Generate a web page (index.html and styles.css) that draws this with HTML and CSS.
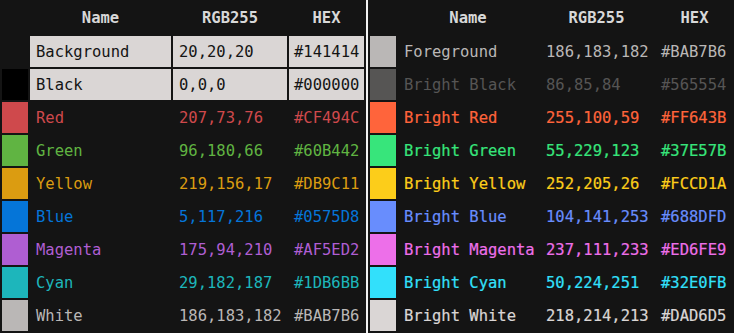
FILE: index.html
```html
<!DOCTYPE html>
<html>
<head>
<meta charset="utf-8">
<link rel="stylesheet" href="styles.css">
</head>
<body>
<div class="page">
  <div class="panel panel-left">
    <div class="head"></div><div class="head">Name</div><div class="head">RGB255</div><div class="head">HEX</div>

    <div class="sw" style="background:#141414"></div><div class="cell hl">Background</div><div class="cell hl">20,20,20</div><div class="cell hl">#141414</div>
    <div class="sw" style="background:#000000"></div><div class="cell hl">Black</div><div class="cell hl">0,0,0</div><div class="cell hl">#000000</div>
    <div class="sw" style="background:#CF494C"></div><div class="cell c-red">Red</div><div class="cell c-red">207,73,76</div><div class="cell c-red">#CF494C</div>
    <div class="sw" style="background:#60B442"></div><div class="cell c-green">Green</div><div class="cell c-green">96,180,66</div><div class="cell c-green">#60B442</div>
    <div class="sw" style="background:#DB9C11"></div><div class="cell c-yellow">Yellow</div><div class="cell c-yellow">219,156,17</div><div class="cell c-yellow">#DB9C11</div>
    <div class="sw" style="background:#0575D8"></div><div class="cell c-blue">Blue</div><div class="cell c-blue">5,117,216</div><div class="cell c-blue">#0575D8</div>
    <div class="sw" style="background:#AF5ED2"></div><div class="cell c-magenta">Magenta</div><div class="cell c-magenta">175,94,210</div><div class="cell c-magenta">#AF5ED2</div>
    <div class="sw" style="background:#1DB6BB"></div><div class="cell c-cyan">Cyan</div><div class="cell c-cyan">29,182,187</div><div class="cell c-cyan">#1DB6BB</div>
    <div class="sw" style="background:#BAB7B6"></div><div class="cell c-white">White</div><div class="cell c-white">186,183,182</div><div class="cell c-white">#BAB7B6</div>
  </div>
  <div class="divider"></div>
  <div class="panel panel-right">
    <div class="head"></div><div class="head">Name</div><div class="head">RGB255</div><div class="head">HEX</div>

    <div class="sw" style="background:#BAB7B6"></div><div class="cell c-fg">Foreground</div><div class="cell c-fg">186,183,182</div><div class="cell c-fg">#BAB7B6</div>
    <div class="sw" style="background:#565554"></div><div class="cell c-bblack">Bright Black</div><div class="cell c-bblack">86,85,84</div><div class="cell c-bblack">#565554</div>
    <div class="sw" style="background:#FF643B"></div><div class="cell b c-bred">Bright Red</div><div class="cell b c-bred">255,100,59</div><div class="cell b c-bred">#FF643B</div>
    <div class="sw" style="background:#37E57B"></div><div class="cell b c-bgreen">Bright Green</div><div class="cell b c-bgreen">55,229,123</div><div class="cell b c-bgreen">#37E57B</div>
    <div class="sw" style="background:#FCCD1A"></div><div class="cell b c-byellow">Bright Yellow</div><div class="cell b c-byellow">252,205,26</div><div class="cell b c-byellow">#FCCD1A</div>
    <div class="sw" style="background:#688DFD"></div><div class="cell b c-bblue">Bright Blue</div><div class="cell b c-bblue">104,141,253</div><div class="cell b c-bblue">#688DFD</div>
    <div class="sw" style="background:#ED6FE9"></div><div class="cell b c-bmagenta">Bright Magenta</div><div class="cell b c-bmagenta">237,111,233</div><div class="cell b c-bmagenta">#ED6FE9</div>
    <div class="sw" style="background:#32E0FB"></div><div class="cell b c-bcyan">Bright Cyan</div><div class="cell b c-bcyan">50,224,251</div><div class="cell b c-bcyan">#32E0FB</div>
    <div class="sw" style="background:#DAD6D5"></div><div class="cell b c-bwhite">Bright White</div><div class="cell b c-bwhite">218,214,213</div><div class="cell b c-bwhite">#DAD6D5</div>
  </div>
</div>
</body>
</html>
```
FILE: styles.css
```css
html, body {
  margin: 0;
  padding: 0;
  background: #141414;
}
body {
  width: 734px;
  height: 333px;
  overflow: hidden;
  font-family: "DejaVu Sans Mono", "Liberation Mono", monospace;
  font-size: 15.5px;
  color: #BAB7B6;
}
.page {
  display: flex;
  height: 333px;
}
.panel {
  display: grid;
  grid-template-rows: 34px repeat(9, 31px);
  row-gap: 2px;
  column-gap: 2px;
  align-content: start;
}
.panel-left {
  padding-left: 2px;
  grid-template-columns: 26px 141px 114px 75px;
}
.panel-right {
  grid-template-columns: 26px 140px 113px 79px;
}
.divider {
  width: 2px;
  margin: 0 2px;
  background: #f2f2f2;
  height: 333px;
}
.head {
  display: flex;
  align-items: center;
  justify-content: center;
  font-weight: bold;
  color: #d8d8d8;
  padding-top: 1px;
}
.cell {
  display: flex;
  align-items: center;
  padding-left: 6px;
  white-space: nowrap;
}
.panel-left .cell:nth-child(4n) { padding-left: 5px; }
.hl {
  background: #DAD6D5;
  color: #141414;
}
.b {
  font-weight: normal;
  -webkit-text-stroke: 0.2px currentColor;
}
.c-red { color: #CF494C; }
.c-green { color: #60B442; }
.c-yellow { color: #DB9C11; }
.c-blue { color: #0575D8; }
.c-magenta { color: #AF5ED2; }
.c-cyan { color: #1DB6BB; }
.c-white { color: #BAB7B6; }
.c-fg { color: #BAB7B6; }
.c-bblack { color: #565554; }
.c-bred { color: #FF643B; }
.c-bgreen { color: #37E57B; }
.c-byellow { color: #FCCD1A; }
.c-bblue { color: #688DFD; }
.c-bmagenta { color: #ED6FE9; }
.c-bcyan { color: #32E0FB; }
.c-bwhite { color: #DAD6D5; }
```
